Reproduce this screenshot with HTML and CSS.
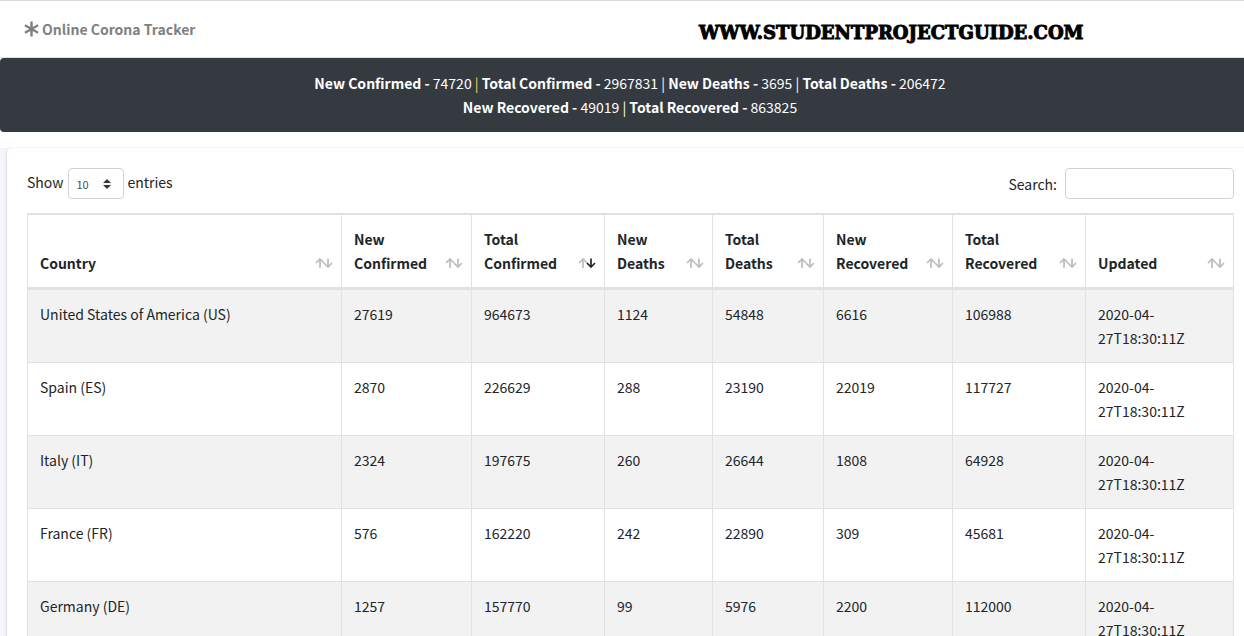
FILE: index.html
```html
<!DOCTYPE html>
<html lang="en">
<head>
<meta charset="utf-8">
<meta name="viewport" content="width=device-width, initial-scale=1">
<title>Online Corona Tracker</title>
<link rel="stylesheet" href="styles.css">
</head>
<body>
<svg class="sprite" aria-hidden="true">
  <symbol id="sort" viewBox="0 0 18 12">
    <path class="up" d="M5 11V2.500M1 6L5 2L9 6"/>
    <path class="down" d="M13 1.500V10M9 6L13 10L17 6"/>
  </symbol>
</svg>
<header class="navbar">
  <a class="brand" href="#">
    <svg class="brand-icon" viewBox="0 0 16 16" aria-hidden="true"><path d="M8 0V16M1 4L15 12M15 4L1 12"/></svg>
    <span>Online Corona Tracker</span>
  </a>
  <a class="site" href="#">WWW.STUDENTPROJECTGUIDE.COM</a>
</header>
<section class="summary">
  <div><b>New Confirmed -</b> 74720 <span class="first-bar">|</span> <b>Total Confirmed -</b> 2967831 | <b>New Deaths -</b> 3695 | <b>Total Deaths -</b> 206472</div>
  <div><b>New Recovered -</b> 49019 | <b>Total Recovered -</b> 863825</div>
</section>
<main class="content">
  <div class="card">
    <div class="controls">
      <label class="length"><span>Show</span>
        <select><option>10</option><option>25</option><option>50</option><option>100</option></select>
        <span>entries</span></label>
      <label class="search">Search: <input type="search"></label>
    </div>
    <table class="data">
      <colgroup>
        <col><col class="w-new-confirmed"><col class="w-total-confirmed"><col class="w-new-deaths"><col class="w-total-deaths"><col class="w-new-recovered"><col class="w-total-recovered"><col class="w-updated">
      </colgroup>
      <thead>
        <tr>
          <th><button>Country<svg class="sort"><use href="#sort"/></svg></button></th>
          <th><button>New<br>Confirmed<svg class="sort"><use href="#sort"/></svg></button></th>
          <th aria-sort="descending"><button>Total<br>Confirmed<svg class="sort desc"><use href="#sort"/></svg></button></th>
          <th><button>New<br>Deaths<svg class="sort"><use href="#sort"/></svg></button></th>
          <th><button>Total<br>Deaths<svg class="sort"><use href="#sort"/></svg></button></th>
          <th><button>New<br>Recovered<svg class="sort"><use href="#sort"/></svg></button></th>
          <th><button>Total<br>Recovered<svg class="sort"><use href="#sort"/></svg></button></th>
          <th><button>Updated<svg class="sort"><use href="#sort"/></svg></button></th>
        </tr>
      </thead>
      <tbody>
        <tr><td>United States of America (US)</td><td>27619</td><td>964673</td><td>1124</td><td>54848</td><td>6616</td><td>106988</td><td>2020-04-<wbr>27T18:30:11Z</td></tr>
        <tr><td>Spain (ES)</td><td>2870</td><td>226629</td><td>288</td><td>23190</td><td>22019</td><td>117727</td><td>2020-04-<wbr>27T18:30:11Z</td></tr>
        <tr><td>Italy (IT)</td><td>2324</td><td>197675</td><td>260</td><td>26644</td><td>1808</td><td>64928</td><td>2020-04-<wbr>27T18:30:11Z</td></tr>
        <tr><td>France (FR)</td><td>576</td><td>162220</td><td>242</td><td>22890</td><td>309</td><td>45681</td><td>2020-04-<wbr>27T18:30:11Z</td></tr>
        <tr><td>Germany (DE)</td><td>1257</td><td>157770</td><td>99</td><td>5976</td><td>2200</td><td>112000</td><td>2020-04-<wbr>27T18:30:11Z</td></tr>
      </tbody>
    </table>
  </div>
</main>
</body>
</html>
```
FILE: styles.css
```css
* { box-sizing: border-box; }
html { overflow: hidden; }
body {
  margin: 0;
  font: 14px/24px "Noto Sans CJK SC", "Open Sans", sans-serif;
  color: #212529;
  background: #fff;
}
.sprite { display: none; }
.navbar {
  display: grid;
  grid-template-columns: 675px 1fr;
  align-items: center;
  height: 58px;
  padding: 0 24px;
  border-top: 1px solid #d9dadf;
  border-bottom: 1px solid #dee2e6;
}
.navbar a { text-decoration: none; }
.brand {
  display: flex;
  align-items: center;
  gap: 3px;
  font-weight: 700;
  color: #808080;
}
.brand-icon { width: 15px; height: 16px; fill: none; stroke: #808080; stroke-width: 2.6; }
.site {
  padding-top: 8px;
  font: 700 18px/24px "DejaVu Serif", serif;
  color: #000;
  -webkit-text-stroke: 1px #000;
}
.summary {
  padding: 13px 0 13px 16px;
  text-align: center;
  color: #fff;
  background: #343a40;
  border-radius: 4px 0 0 4px;
}
.first-bar { color: #ffd75e; }
.content {
  margin-top: 16px;
  padding-left: 7px;
  background: #f4f6f9;
}
.card {
  padding: 20px 10px 20px 20px;
  background: #fff;
  border-radius: 4px 0 0 0;
  box-shadow: 0 0 1px rgba(0, 0, 0, .13), 0 1px 3px rgba(0, 0, 0, .2);
}
.controls {
  display: flex;
  justify-content: space-between;
  margin-bottom: 14px;
}
.controls label { display: flex; align-items: center; }
.length { gap: 4px; }
.length span { padding-bottom: 4px; }
.search { gap: 8px; }
.controls select, .controls input {
  height: 31px;
  border: 1px solid #ced4da;
  border-radius: 4px;
  background-color: #fff;
  font: 11px/18px "Noto Sans CJK SC", sans-serif;
  color: #495057;
}
.controls select {
  appearance: none;
  width: 56px;
  padding: 0 8px;
  background-image: url("data:image/svg+xml,%3Csvg xmlns='http://www.w3.org/2000/svg' viewBox='0 0 4 5'%3E%3Cpath fill='%23343a40' d='M2 0L0 2h4zm0 5L0 3h4z'/%3E%3C/svg%3E");
  background-repeat: no-repeat;
  background-position: right 12px center;
  background-size: 8px 10px;
}
.controls input { width: 169px; padding: 4px 8px; }
.data {
  width: 100%;
  table-layout: fixed;
  border-collapse: separate;
  border-spacing: 0;
  border: 0 solid #dee2e6;
  border-width: 1px 1px 0 0;
}
.w-new-confirmed { width: 130px; }
.w-total-confirmed { width: 133px; }
.w-new-deaths { width: 108px; }
.w-total-deaths { width: 111px; }
.w-new-recovered { width: 129px; }
.w-total-recovered { width: 133px; }
.w-updated { width: 148px; }
.data th, .data td {
  padding: 12px;
  border: 0 solid #dee2e6;
  border-width: 1px 0 0 1px;
  text-align: left;
  vertical-align: top;
}
.data th { vertical-align: bottom; border-bottom-width: 2px; padding-right: 8px; }
.data th button {
  display: flex;
  width: 100%;
  justify-content: space-between;
  align-items: flex-end;
  padding: 0;
  border: 0;
  background: none;
  font: inherit;
  color: inherit;
  text-align: left;
}
.data tbody tr:nth-child(odd) { background: #f2f2f2; }
.sort {
  flex: none;
  width: 18px;
  height: 12px;
  margin-bottom: 6px;
  fill: none;
  stroke: #bcbdbe;
  stroke-width: 1.7;
}
.desc { --down: #212529; }
.down { stroke: var(--down, #bcbdbe); }
```
